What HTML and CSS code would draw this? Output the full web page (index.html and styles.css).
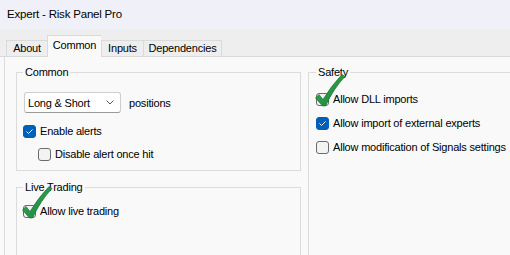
FILE: index.html
```html
<!DOCTYPE html>
<html>
<head>
  <title>Expert - Risk Panel Pro</title>
  <link rel="stylesheet" href="styles.css">
</head>
<body>
  <div class="titlebar">Expert - Risk Panel Pro</div>

  <div class="tabbar">
    <div class="tab about">About</div>
    <div class="tab common active">Common</div>
    <div class="tab inputs">Inputs</div>
    <div class="tab deps">Dependencies</div>
  </div>

  <div class="page">
    <div class="col left">
      <fieldset class="group common">
        <legend>Common</legend>
        <div class="row">
          <div class="select">
            <span>Long &amp; Short</span>
            <svg class="chevron" width="8" height="5" viewBox="0 0 8 5"><path d="M0.5 0.5 L4 4 L7.5 0.5" fill="none" stroke="#5c5c5c" stroke-width="1"/></svg>
          </div>
          <span>positions</span>
        </div>
        <div class="check first">
          <span class="box on"><svg width="11" height="11" viewBox="0 0 11 11"><path d="M2.5 5.5 L4.5 7.5 L8.5 3.5" fill="none" stroke="#fff" stroke-width="1"/></svg></span>
          <span>Enable alerts</span>
        </div>
        <div class="check sub">
          <span class="box"></span>
          <span>Disable alert once hit</span>
        </div>
      </fieldset>

      <fieldset class="group live">
        <legend>Live Trading</legend>
        <div class="check first">
          <span class="box">
            <svg class="mark" width="32" height="34" viewBox="0 0 32 34">
              <defs>
                <linearGradient id="g1" x1="0" y1="0" x2="1" y2="1">
                  <stop offset="0" stop-color="#3fae57"/>
                  <stop offset="1" stop-color="#148036"/>
                </linearGradient>
              </defs>
              <path d="M0.5 24 L4 20.5 L8 25.5 Q16 12 27 0.5 L30 2.5 Q19 14 10.5 32 L7.5 32 Z" fill="url(#g1)" stroke="#0f6a2a" stroke-width="0.6"/>
            </svg>
          </span>
          <span>Allow live trading</span>
        </div>
      </fieldset>
    </div>

    <div class="col right">
      <fieldset class="group safety">
        <legend>Safety</legend>
        <div class="check first">
          <span class="box">
            <svg class="mark" width="32" height="34" viewBox="0 0 32 34">
              <defs>
                <linearGradient id="g2" x1="0" y1="0" x2="1" y2="1">
                  <stop offset="0" stop-color="#3fae57"/>
                  <stop offset="1" stop-color="#148036"/>
                </linearGradient>
              </defs>
              <path d="M0.5 24 L4 20.5 L8 25.5 Q16 12 27 0.5 L30 2.5 Q19 14 10.5 32 L7.5 32 Z" fill="url(#g2)" stroke="#0f6a2a" stroke-width="0.6"/>
            </svg>
          </span>
          <span>Allow DLL imports</span>
        </div>
        <div class="check">
          <span class="box on"><svg width="11" height="11" viewBox="0 0 11 11"><path d="M2.5 5.5 L4.5 7.5 L8.5 3.5" fill="none" stroke="#fff" stroke-width="1"/></svg></span>
          <span>Allow import of external experts</span>
        </div>
        <div class="check">
          <span class="box"></span>
          <span>Allow modification of Signals settings</span>
        </div>
      </fieldset>
    </div>
  </div>
</body>
</html>
```

FILE: styles.css
```css
/* Window */
body {
  margin: 0;
  width: 510px;
  height: 255px;
  overflow: hidden;
  background-color: #f9f9f9;
  font-family: "Liberation Sans", Arial, sans-serif;
  font-size: 11px;
  letter-spacing: -0.2px;
  color: #000;
}

.titlebar {
  height: 29px;
  padding-left: 7px;
  background-color: #f0f0f9;
  font-size: 11.5px;
  line-height: 28px;
}

/* Tabs */
.tabbar {
  display: flex;
  align-items: flex-end;
  height: 28px;
  padding-left: 6px;
  background-color: #eeeeee;
  border-bottom: 1px solid #d9d9d9;
  box-sizing: border-box;
}

.tab {
  height: 16px;
  border: 1px solid #dadada;
  border-bottom: none;
  border-right: none;
  line-height: 15px;
  text-align: center;
  box-sizing: border-box;
}

.tab.about { width: 41px; }
.tab.common { width: 54px; }
.tab.inputs { width: 42px; }
.tab.deps { width: 79px; }

.tab:last-child {
  border-right: 1px solid #dadada;
}

.tab.active {
  height: 22px;
  margin-bottom: -1px;
  padding-top: 2px;
  background-color: #f9f9f9;
}

/* Page */
.page {
  display: flex;
  gap: 7px;
  height: 198px;
  margin-left: 4px;
  padding: 7px 0 0 11px;
  border-left: 1px solid #dcdcdc;
  box-sizing: border-box;
}

.col.left {
  width: 285px;
  flex: none;
}

.col.right {
  width: 202px;
  flex: none;
}

.group {
  margin: 0;
  padding: 0 0 0 6px;
  min-width: 0;
  border: 1px solid #dcdcdc;
  box-sizing: border-box;
}

.group legend {
  padding: 0 2px;
  line-height: 16px;
}

.group.common {
  height: 107px;
}

/* runs on past the bottom of the window */
.group.live {
  height: 76px;
  margin-top: 8px;
  border-bottom: none;
}

.group.safety {
  height: 191px;
  padding-left: 7px;
  border-right: none;
  border-bottom: none;
}

/* Controls */
.row {
  display: flex;
  align-items: center;
  gap: 8px;
  margin-top: 12px;
  margin-left: 1px;
}

.select {
  display: flex;
  align-items: center;
  justify-content: space-between;
  width: 97px;
  height: 21px;
  padding: 0 6px 0 3px;
  background-color: #fff;
  border: 1px solid #cdcdcd;
  border-bottom-color: #9a9a9a;
  border-radius: 3px;
  box-sizing: border-box;
}

.check {
  display: flex;
  align-items: center;
  gap: 4px;
  height: 16px;
  margin-top: 8px;
  white-space: nowrap;
}

.common .check.first {
  margin-top: 10px;
}

.live .check.first {
  margin-top: 8px;
}

.safety .check.first {
  margin-top: 11px;
}

.check.sub {
  margin-top: 7px;
  margin-left: 15px;
}

.box {
  position: relative;
  display: flex;
  align-items: center;
  justify-content: center;
  flex: none;
  width: 13px;
  height: 13px;
  background-color: #f3f3f3;
  border: 1px solid #6b6b6b;
  border-radius: 3px;
  box-sizing: border-box;
}

.box.on {
  background-color: #005fb8;
  border-color: #005fb8;
}

/* green tick drawn over the box */
.box .mark {
  position: absolute;
  left: -2px;
  top: -20px;
}
```
